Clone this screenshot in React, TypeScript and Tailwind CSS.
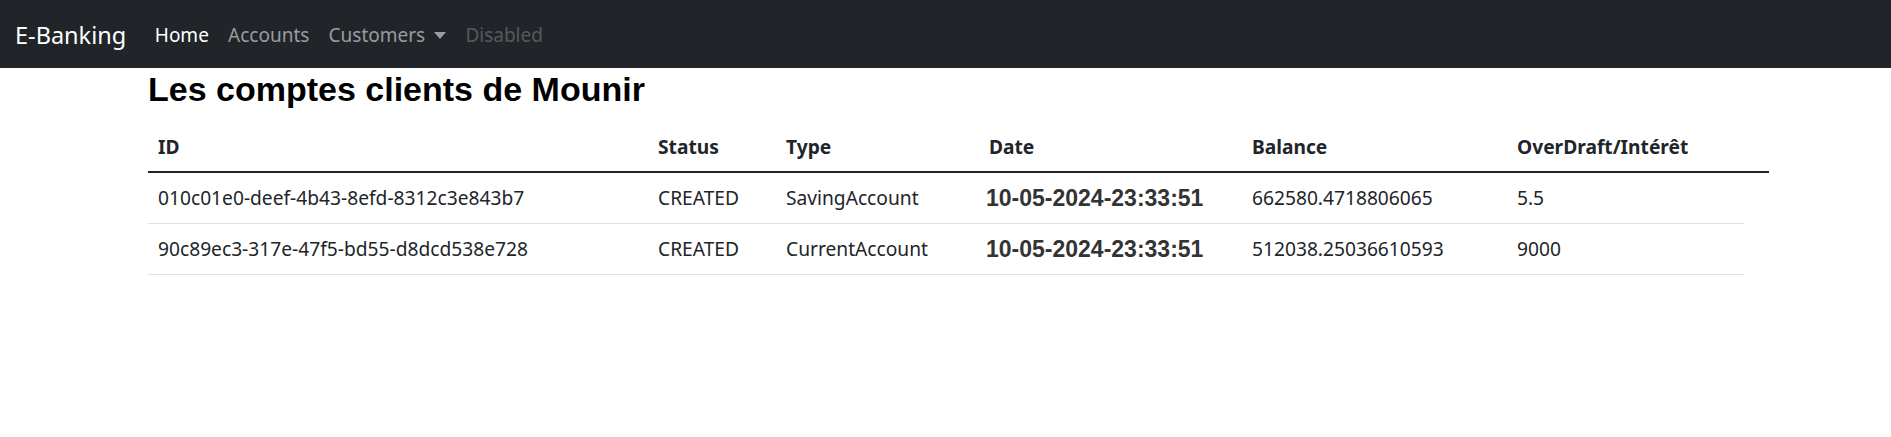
import React from "react";

const rows = [
  {
    id: "010c01e0-deef-4b43-8efd-8312c3e843b7",
    status: "CREATED",
    type: "SavingAccount",
    date: "10-05-2024-23:33:51",
    balance: "662580.4718806065",
    extra: "5.5",
  },
  {
    id: "90c89ec3-317e-47f5-bd55-d8dcd538e728",
    status: "CREATED",
    type: "CurrentAccount",
    date: "10-05-2024-23:33:51",
    balance: "512038.25036610593",
    extra: "9000",
  },
];

const grid = "grid grid-cols-[500px_128px_203px_263px_265px_237px]";

export default function App() {
  return (
    <div className="min-h-[437px] bg-white text-[#212529] font-['Noto_Sans',sans-serif]">
      <nav className="flex h-[68px] items-center bg-[#212529] pl-[15px] pt-[2px]">
        <span className="mr-[19px] text-[23.5px] leading-[36px] text-white">E-Banking</span>
        <a className="px-[9.6px] text-[19px] leading-[29px] text-white">Home</a>
        <a className="px-[9.6px] text-[19px] leading-[29px] text-[#9a9c9f]">Accounts</a>
        <a className="flex items-center px-[9.6px] text-[19px] leading-[29px] text-[#9a9c9f]">
          Customers
          <span className="ml-[9px] inline-block h-0 w-0 border-x-[6.5px] border-t-[7px] border-x-transparent border-t-[#9a9c9f]" />
        </a>
        <a className="px-[9.6px] text-[19px] leading-[29px] text-[#58595d]">Disabled</a>
      </nav>

      <div className="pl-[148px]">
        <h1 className="pt-[1px] font-['Liberation_Sans',Arial,sans-serif] text-[34px] font-bold leading-[40px] text-black">
          Les comptes clients de Mounir
        </h1>
        <div className="mt-[14px] w-[1621px] border-b-[2px] border-[#212529]">
          <div className={`${grid} h-[48px] items-center text-[19.2px] font-bold`}>
            <div className="pl-[10px]">ID</div>
            <div className="pl-[10px]">Status</div>
            <div className="pl-[10px]">Type</div>
            <div className="pl-[10px]">Date</div>
            <div className="pl-[10px]">Balance</div>
            <div className="pl-[10px]">OverDraft/Intérêt</div>
          </div>
        </div>
        {rows.map((r) => (
          <div key={r.id} className={`${grid} h-[51px] w-[1596px] items-center border-b border-[#dee2e6] text-[19.2px]`}>
            <div className="pl-[10px]">{r.id}</div>
            <div className="pl-[10px]">{r.status}</div>
            <div className="pl-[10px]">{r.type}</div>
            <div className="pl-[7px] font-['Liberation_Sans',Arial,sans-serif] text-[23px] font-bold text-[#333333]">
              {r.date}
            </div>
            <div className="pl-[10px]">{r.balance}</div>
            <div className="pl-[10px]">{r.extra}</div>
          </div>
        ))}
      </div>
    </div>
  );
}
